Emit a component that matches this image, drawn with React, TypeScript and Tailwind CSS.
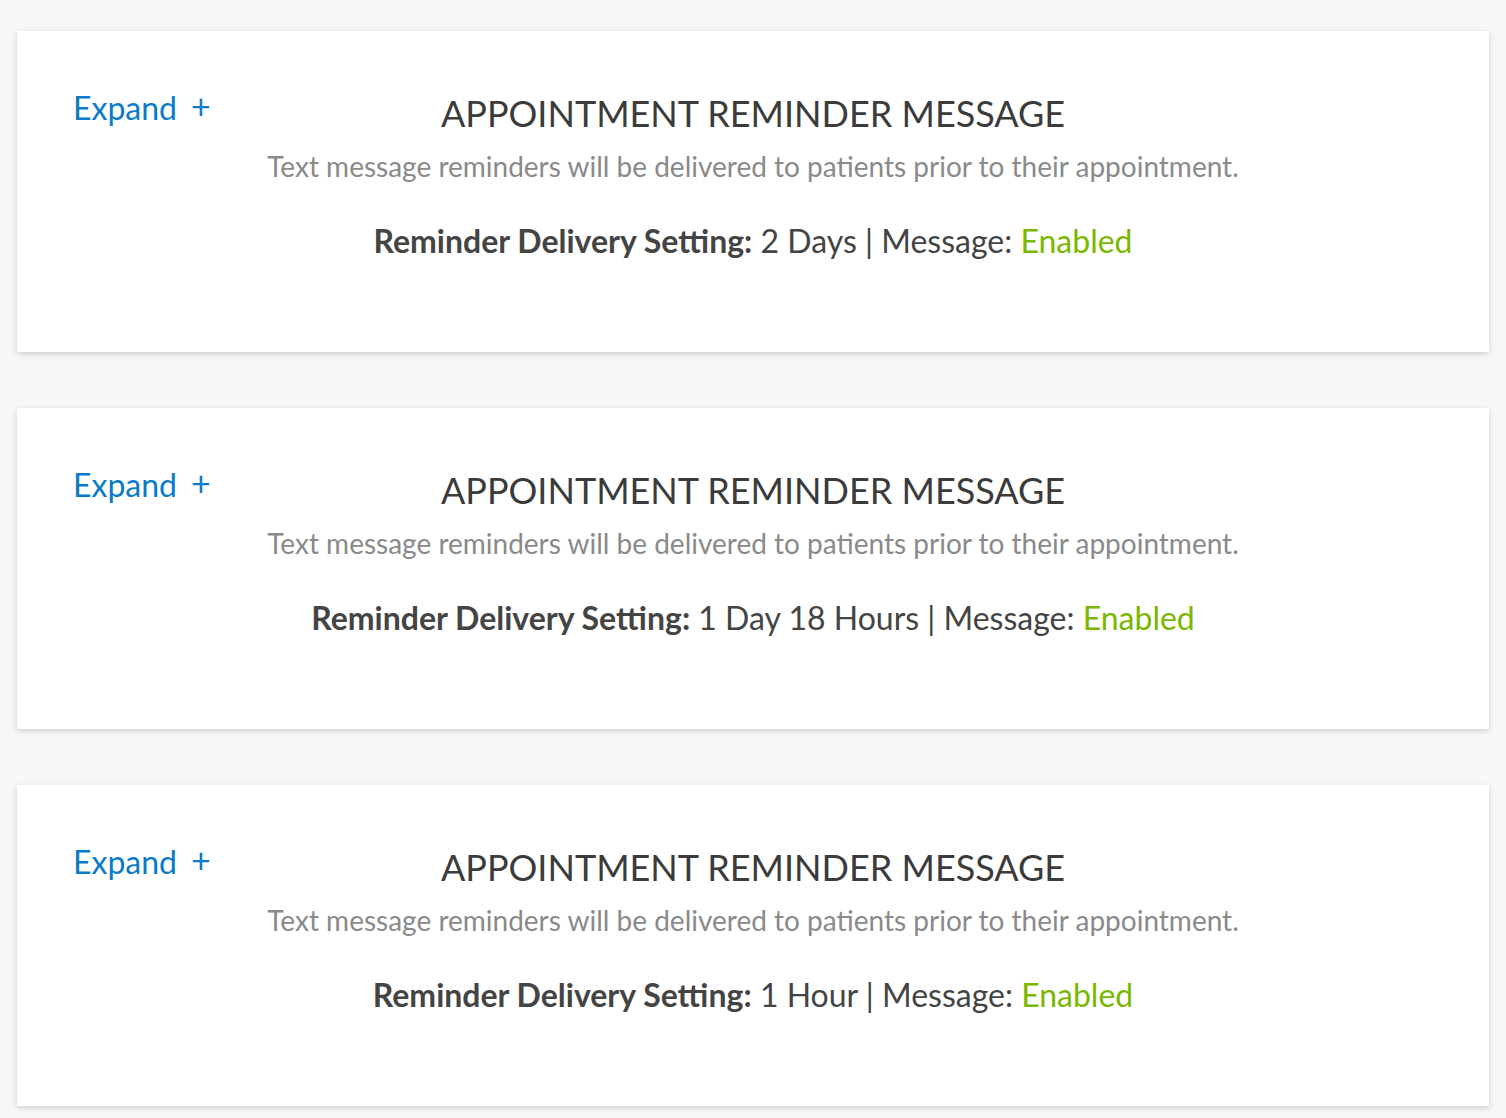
import React from 'react';

const reminders = [
  { delivery: '2 Days' },
  { delivery: '1 Day 18 Hours' },
  { delivery: '1 Hour' },
];

function ReminderCard({ delivery }: { delivery: string }) {
  return (
    <div className="bg-white h-[321px] shadow-[0_2px_6px_rgba(0,0,0,0.16)] grid grid-cols-[1fr_auto_1fr]">
      <div className="pl-[56px] pt-[57px]">
        <button className="flex items-center gap-[14px] text-[#0a7acb] text-[32px] leading-[40px]">
          <span>Expand</span>
          <span className="text-[34px] -mt-[5px]">+</span>
        </button>
      </div>
      <div className="flex flex-col items-center pt-[60px] text-center">
        <h2 className="text-[36px] leading-[44px] text-[#3b3b3b]">
          APPOINTMENT REMINDER MESSAGE
        </h2>
        <p className="text-[28px] leading-[36px] text-[#8a8a8a] mt-[13px]">
          Text message reminders will be delivered to patients prior to their appointment.
        </p>
        <p className="text-[32px] leading-[40px] text-[#444444] mt-[37px]">
          <span className="font-bold">Reminder Delivery Setting:</span> {delivery} | Message:{' '}
          <span className="text-[#7ab800]">Enabled</span>
        </p>
      </div>
      <div />
    </div>
  );
}

export default function App() {
  return (
    <div
      className="min-h-screen bg-[#f7f7f7] px-[17px] pt-[31px] pb-[12px] flex flex-col gap-[56px]"
      style={{ fontFamily: 'Lato, "Open Sans", sans-serif' }}
    >
      {reminders.map((r, i) => (
        <ReminderCard key={i} delivery={r.delivery} />
      ))}
    </div>
  );
}
